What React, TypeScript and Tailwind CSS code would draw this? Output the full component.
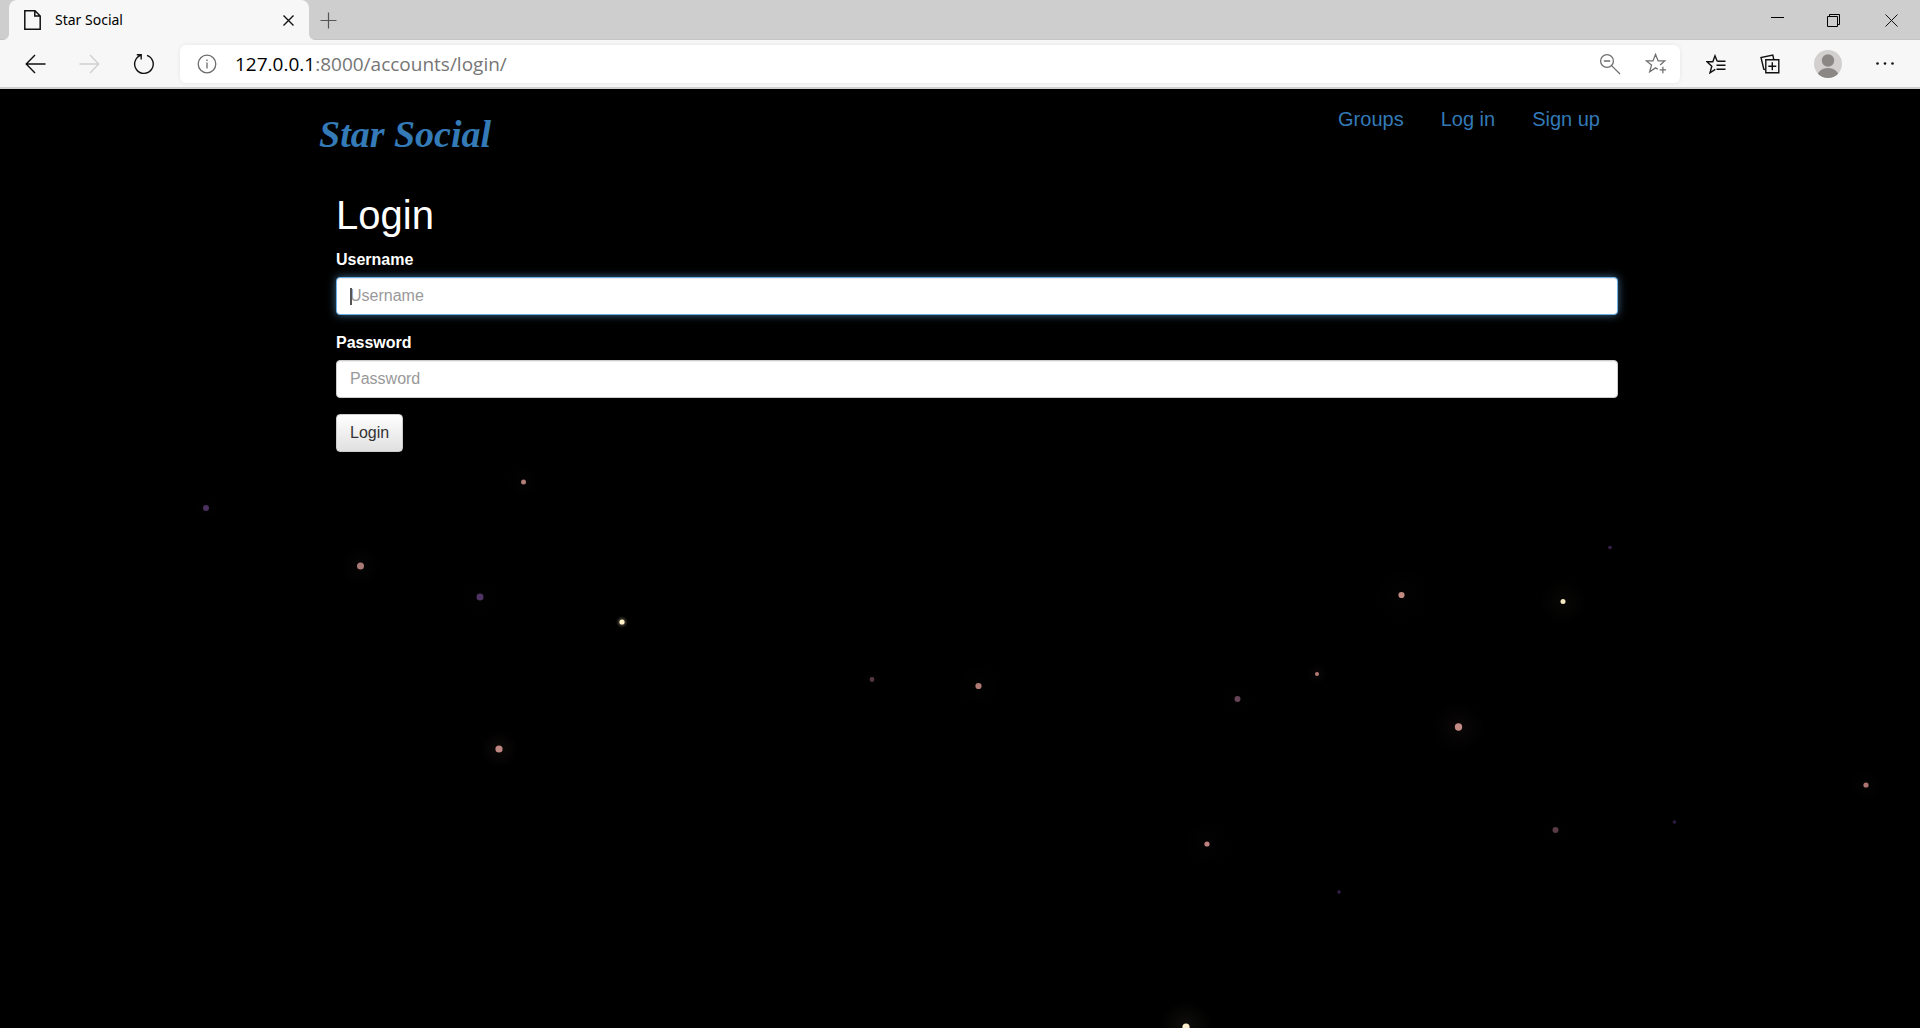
import React from "react";

type Star = { x: number; y: number; r: number; color: string; halo: number; glow: number };

const stars: Star[] = [
  { x: 206, y: 419, r: 3, color: "#4b3060", halo: 12, glow: 0.04 },
  { x: 523.5, y: 393, r: 2.5, color: "#b07d78", halo: 17, glow: 0.02 },
  { x: 360.5, y: 477, r: 3.5, color: "#a87a75", halo: 20, glow: 0.04 },
  { x: 480, y: 508, r: 3.5, color: "#4f3463", halo: 19, glow: 0.03 },
  { x: 622, y: 533, r: 2.6, color: "#fff0c8", halo: 6, glow: 0.4 },
  { x: 499, y: 660, r: 3.6, color: "#bf8682", halo: 19, glow: 0.07 },
  { x: 872, y: 590.5, r: 2.4, color: "#55383f", halo: 11, glow: 0.03 },
  { x: 978.5, y: 597, r: 3.1, color: "#b07a74", halo: 22, glow: 0.02 },
  { x: 1237.5, y: 610, r: 3, color: "#644456", halo: 17, glow: 0.02 },
  { x: 1207, y: 755, r: 2.6, color: "#c08080", halo: 24, glow: 0.02 },
  { x: 1186, y: 938, r: 3.6, color: "#fff0cc", halo: 26, glow: 0.06 },
  { x: 1610, y: 458.5, r: 1.8, color: "#38204a", halo: 6, glow: 0.02 },
  { x: 1401.5, y: 506, r: 3.1, color: "#c08a82", halo: 28, glow: 0.02 },
  { x: 1563, y: 512.5, r: 2.5, color: "#f5e8c0", halo: 23, glow: 0.03 },
  { x: 1317, y: 585, r: 2, color: "#b57c76", halo: 11, glow: 0.05 },
  { x: 1458.5, y: 638, r: 3.7, color: "#c48a85", halo: 26, glow: 0.05 },
  { x: 1866, y: 696, r: 2.6, color: "#ac7470", halo: 16, glow: 0.03 },
  { x: 1555.5, y: 741, r: 3, color: "#583b44", halo: 14, glow: 0.02 },
  { x: 1674.5, y: 733, r: 1.8, color: "#301c40", halo: 6, glow: 0.02 },
  { x: 1339, y: 803, r: 1.7, color: "#37204c", halo: 6, glow: 0.02 },
];

function Starfield() {
  return (
    <svg className="pointer-events-none absolute inset-0 h-full w-full" aria-hidden="true">
      <defs>
        {stars.map((s, i) => (
          <radialGradient id={`halo-${i}`} key={i}>
            <stop offset="0" stopColor={s.color} stopOpacity={s.glow} />
            <stop offset="1" stopColor={s.color} stopOpacity="0" />
          </radialGradient>
        ))}
      </defs>
      {stars.map((s, i) => (
        <g key={i}>
          <circle cx={s.x} cy={s.y} r={s.halo} fill={`url(#halo-${i})`} />
          <circle cx={s.x} cy={s.y} r={s.r} fill={s.color} />
        </g>
      ))}
    </svg>
  );
}

function TabStrip() {
  return (
    <div className="flex h-10 bg-[#cecece] shadow-[inset_0_-1px_0_#c4c4c4]">
      <div className="relative ml-[9px] flex w-[300px] items-center rounded-t-lg bg-[#f7f7f7] pl-[15px] pr-[11px]">
        <svg className="absolute bottom-0 -left-1.5" width="6" height="6" viewBox="0 0 6 6" fill="#f7f7f7" aria-hidden="true">
          <path d="M6 0V6H0A6 6 0 0 0 6 0Z" />
        </svg>
        <svg className="absolute -right-1.5 bottom-0" width="6" height="6" viewBox="0 0 6 6" fill="#f7f7f7" aria-hidden="true">
          <path d="M0 0V6H6A6 6 0 0 1 0 0Z" />
        </svg>
        <svg width="17" height="20" viewBox="0 0 17 20" fill="none" stroke="#111" strokeWidth="1.5" aria-hidden="true">
          <path d="M0.8 0.8H11L16.2 6V19.2H0.8ZM10.8 0.8V6H16.2" />
        </svg>
        <span className="ml-3.5 flex-1 text-sm leading-5 text-black font-['Noto_Sans',sans-serif]">Star Social</span>
        <button aria-label="Close tab" className="flex size-5 items-center justify-center">
          <svg width="11" height="11" viewBox="0 0 11 11" stroke="#111" strokeWidth="1.4" aria-hidden="true">
            <path d="M0.5 0.5L10.5 10.5M10.5 0.5L0.5 10.5" />
          </svg>
        </button>
      </div>
      <button aria-label="New tab" className="flex w-[38px] items-center justify-center">
        <svg width="17" height="17" viewBox="0 0 17 17" stroke="#555" strokeWidth="1.2" aria-hidden="true">
          <path d="M8.5 0.5V16.5M0.5 8.5H16.5" />
        </svg>
      </button>
      <div className="ml-auto flex">
        <button aria-label="Minimize" className="flex w-14 items-center justify-center">
          <svg width="13" height="13" viewBox="0 0 13 13" stroke="#000" aria-hidden="true">
            <path d="M0 3.5H13" />
          </svg>
        </button>
        <button aria-label="Restore" className="flex w-[57px] items-center justify-center">
          <svg width="13" height="13" viewBox="0 0 13 13" fill="none" stroke="#000" aria-hidden="true">
            <path d="M0.5 2.5H10.5V12.5H0.5ZM2.5 2.5V0.5H12.5V10.5H10.5" />
          </svg>
        </button>
        <button aria-label="Close window" className="flex w-[58px] items-center justify-center">
          <svg width="13" height="13" viewBox="0 0 13 13" stroke="#111" aria-hidden="true">
            <path d="M0.5 0.5L12.5 12.5M12.5 0.5L0.5 12.5" />
          </svg>
        </button>
      </div>
    </div>
  );
}

function Toolbar() {
  return (
    <div className="flex h-[49px] items-center border-b-2 border-[#cfcfcf] bg-[#f7f7f7]">
      <div className="flex w-[180px] items-center gap-[33px] pl-[25px]">
        <button aria-label="Back">
          <svg width="21" height="20" viewBox="0 0 21 20" fill="none" stroke="#111" strokeWidth="1.4" aria-hidden="true">
            <path d="M10 1L1.2 10L10 19M1.2 10H20.5" />
          </svg>
        </button>
        <button aria-label="Forward" disabled>
          <svg width="21" height="20" viewBox="0 0 21 20" fill="none" stroke="#d0d0d0" strokeWidth="1.4" aria-hidden="true">
            <path d="M11 1L19.8 10L11 19M19.8 10H0.5" />
          </svg>
        </button>
        <button aria-label="Reload">
          <svg width="22" height="22" viewBox="0 0 22 22" fill="none" stroke="#111" strokeWidth="1.4" aria-hidden="true">
            <path d="M14 2.3A9.3 9.3 0 1 1 7.6 2.4M3.8 1.7H8.2V6.4" />
          </svg>
        </button>
      </div>
      <div className="flex h-[38px] flex-1 items-center rounded-md bg-white pl-[17px] pr-[13px] shadow-[0_0_4px_rgba(0,0,0,0.08)]">
        <svg width="20" height="20" viewBox="0 0 20 20" fill="none" stroke="#6b6b6b" strokeWidth="1.3" aria-hidden="true">
          <circle cx="10" cy="10" r="8.8" />
          <path d="M10 8.5V14.5M10 5.5V7" />
        </svg>
        <div className="ml-[18px] flex-1 text-[19px] leading-6 text-[#767676]">
          <span className="text-black">127.0.0.1</span>:8000/accounts/login/
        </div>
        <div className="flex items-center gap-6">
          <button aria-label="Zoom out">
            <svg width="22" height="22" viewBox="0 0 22 22" fill="none" stroke="#6f6f6f" strokeWidth="1.3" aria-hidden="true">
              <circle cx="8" cy="8" r="6.4" />
              <path d="M4.8 8H11.2M12.6 12.6L21 21" />
            </svg>
          </button>
          <button aria-label="Add to favorites">
            <svg width="22" height="22" viewBox="1 1 24 24" fill="none" stroke="#6f6f6f" strokeWidth="1.4" aria-hidden="true">
              <path d="M15 18.8L12.5 17.2L6.1 21.5L8.1 14.2L2.5 9.6H9.7L12.5 2.5L15.3 9.6H22.5L17.5 14M20.5 16V23M17 19.5H24" />
            </svg>
          </button>
        </div>
      </div>
      <div className="flex w-60 items-center justify-between pl-[26px] pr-[25px]">
        <button aria-label="Favorites">
          <svg width="20" height="20" viewBox="0 0 20 20" fill="none" stroke="#111" strokeWidth="1.4" aria-hidden="true">
            <path d="M11.3 7.3H19.5M10.5 11.3H19.5M10.5 15.3H19.5M9.3 15.3L4 18.8L5.8 12.2L1 7.8H6.8L9 1.8L11.2 7.3" />
          </svg>
        </button>
        <button aria-label="Collections" className="ml-px">
          <svg width="20" height="20" viewBox="0 0 20 20" fill="none" stroke="#111" strokeWidth="1.4" aria-hidden="true">
            <path d="M5.8 5.8H18.8V18.8H5.8ZM12.3 8.3V16.3M8.3 12.3H16.3M5 15.6L3.8 15.2L1 3.5L12.8 1L13.8 5.5" />
          </svg>
        </button>
        <button aria-label="Profile">
          <svg width="28" height="28" viewBox="0 0 28 28" aria-hidden="true">
            <clipPath id="avatar">
              <circle cx="14" cy="14" r="14" />
            </clipPath>
            <g clipPath="url(#avatar)">
              <rect width="28" height="28" fill="#d2d0ce" />
              <circle cx="14" cy="10.5" r="6.2" fill="#8a8785" />
              <ellipse cx="14" cy="26" rx="10.5" ry="8" fill="#8a8785" />
            </g>
          </svg>
        </button>
        <button aria-label="Settings and more">
          <svg width="20" height="20" viewBox="0 0 20 20" fill="#111" aria-hidden="true">
            <circle cx="2.5" cy="9.5" r="1.3" />
            <circle cx="10" cy="9.5" r="1.3" />
            <circle cx="17.5" cy="9.5" r="1.3" />
          </svg>
        </button>
      </div>
    </div>
  );
}

function Field({ id, type, label, focused }: { id: string; type: string; label: string; focused?: boolean }) {
  return (
    <div className="mb-4">
      <label htmlFor={id} className="mb-1.5 block text-base leading-[23px] font-bold text-white">
        {label}
      </label>
      <div className="relative">
        <input
          id={id}
          type={type}
          placeholder={label}
          className={
            focused
              ? "block h-[38px] w-full rounded-[4px] border border-[#66afe9] bg-white px-[13px] text-base text-[#555] shadow-[inset_0_1px_1px_rgba(0,0,0,0.075),0_0_9px_rgba(102,175,233,0.6)] outline-none placeholder:text-[#999]"
              : "block h-[38px] w-full rounded-[4px] border border-[#ccc] bg-white px-[13px] text-base text-[#555] shadow-[inset_0_1px_1px_rgba(0,0,0,0.075)] outline-none placeholder:text-[#999]"
          }
        />
        {focused && <span className="absolute top-[11px] left-[14px] h-[17px] w-[2px] bg-[#555]" />}
      </div>
    </div>
  );
}

export default function App() {
  return (
    <div className="flex h-screen flex-col overflow-hidden font-['Open_Sans',sans-serif]">
      <header>
        <TabStrip />
        <Toolbar />
      </header>
      <div className="relative flex-1 overflow-hidden bg-black font-['Liberation_Sans',Arial,sans-serif]">
        <Starfield />
        <div className="relative mx-auto w-full max-w-[1316px] pl-[17px]">
          <nav className="flex items-start justify-between">
            <a href="#home" className="mt-[22px] text-[38px] leading-[46px] font-bold italic text-[#337ab7] font-['Liberation_Serif',serif]">
              Star Social
            </a>
            <div className="flex gap-[37px] pt-[18px] pr-[18px] text-[20px] leading-6 text-[#337ab7]">
              <a href="#groups">Groups</a>
              <a href="#login">Log in</a>
              <a href="#signup">Sign up</a>
            </div>
          </nav>
          <main className="pt-9 pl-[17px]">
            <h1 className="mb-2.5 text-[40px] leading-[45px] text-white">Login</h1>
            <form onSubmit={(e) => e.preventDefault()}>
              <Field id="username" type="text" label="Username" focused />
              <Field id="password" type="password" label="Password" />
              <button
                type="submit"
                className="h-[38px] rounded-[4px] border border-[#ccc] bg-linear-to-b from-white to-[#e0e0e0] px-[13px] text-base text-[#333]"
              >
                Login
              </button>
            </form>
          </main>
        </div>
      </div>
    </div>
  );
}
